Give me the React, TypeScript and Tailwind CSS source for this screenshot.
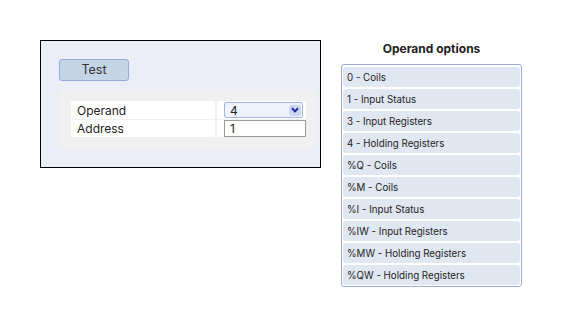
import React from "react"

const operandOptions = [
  "0 - Coils",
  "1 - Input Status",
  "3 - Input Registers",
  "4 - Holding Registers",
  "%Q - Coils",
  "%M - Coils",
  "%I - Input Status",
  "%IW - Input Registers",
  "%MW - Holding Registers",
  "%QW - Holding Registers",
]

export default function App() {
  return (
    <div className="min-h-[327px] bg-white font-['Inter',sans-serif] text-[#222]">
      <div className="flex items-start pl-[40px] pt-[40px]">
        {/* test panel */}
        <div className="w-[281px] h-[128px] border border-black bg-[#ebeef6] pl-[18px] pt-[18px]">
          <button className="block w-[70px] h-[22px] rounded-[3px] border border-[#97aad8] bg-[#c4d5e5] text-[12.5px] text-[#333] leading-none">
            Test
          </button>
          <div className="mt-[9px] w-[258px] h-[59px] bg-[#f0f0f0] pl-[12px] pt-[11px]">
            <div className="grid grid-cols-[144px_89px] gap-x-[2px] gap-y-[1px]">
              <div className="h-[18px] bg-white pl-[6px] pt-[1px] text-[12px] leading-[17px]">Operand</div>
              <div className="h-[18px] bg-white pl-[7px] pt-[1px]">
                <div className="flex items-center w-[79px] h-[16px] rounded-[2px] border border-[#a7b5e3] bg-[#eef3fd] pl-[5px] pr-[1px]">
                  <span className="flex-1 pt-[1px] text-[12px] leading-none">4</span>
                  <span className="flex items-center justify-center w-[12px] h-[11px] rounded-[2px] bg-[#cbd7ee]">
                    <svg width="8" height="6" viewBox="0 0 8 6">
                      <path d="M1 1.2 L4 4.4 L7 1.2" fill="none" stroke="#1c2aa8" strokeWidth="2" />
                    </svg>
                  </span>
                </div>
              </div>
              <div className="h-[17px] bg-white pl-[6px] pt-[1px] text-[12px] leading-[16px]">Address</div>
              <div className="h-[17px] bg-white pl-[7px]">
                <div className="w-[82px] h-[17px] border border-[#9a9a9a] bg-white pl-[5px] pt-[1px] text-[12px] leading-[14px]">1</div>
              </div>
            </div>
          </div>
        </div>

        {/* operand options */}
        <div className="ml-[20px] w-[181px] flex flex-col items-center">
          <div className="h-[16px] pt-[1px] text-[12px] font-bold leading-[15px] text-[#222]">Operand options</div>
          <div className="mt-[8px] w-full rounded-[3px] border border-[#9ea9da] px-[1px] pt-[2px] pb-[1px] flex flex-col gap-[2px]">
            {operandOptions.map((option) => (
              <div
                key={option}
                className="h-[20px] rounded-[3px] bg-[#e0e7f1] pl-[4px] pt-[1px] text-[9.75px] leading-[19px] text-[#222]"
              >
                {option}
              </div>
            ))}
          </div>
        </div>
      </div>
    </div>
  )
}
